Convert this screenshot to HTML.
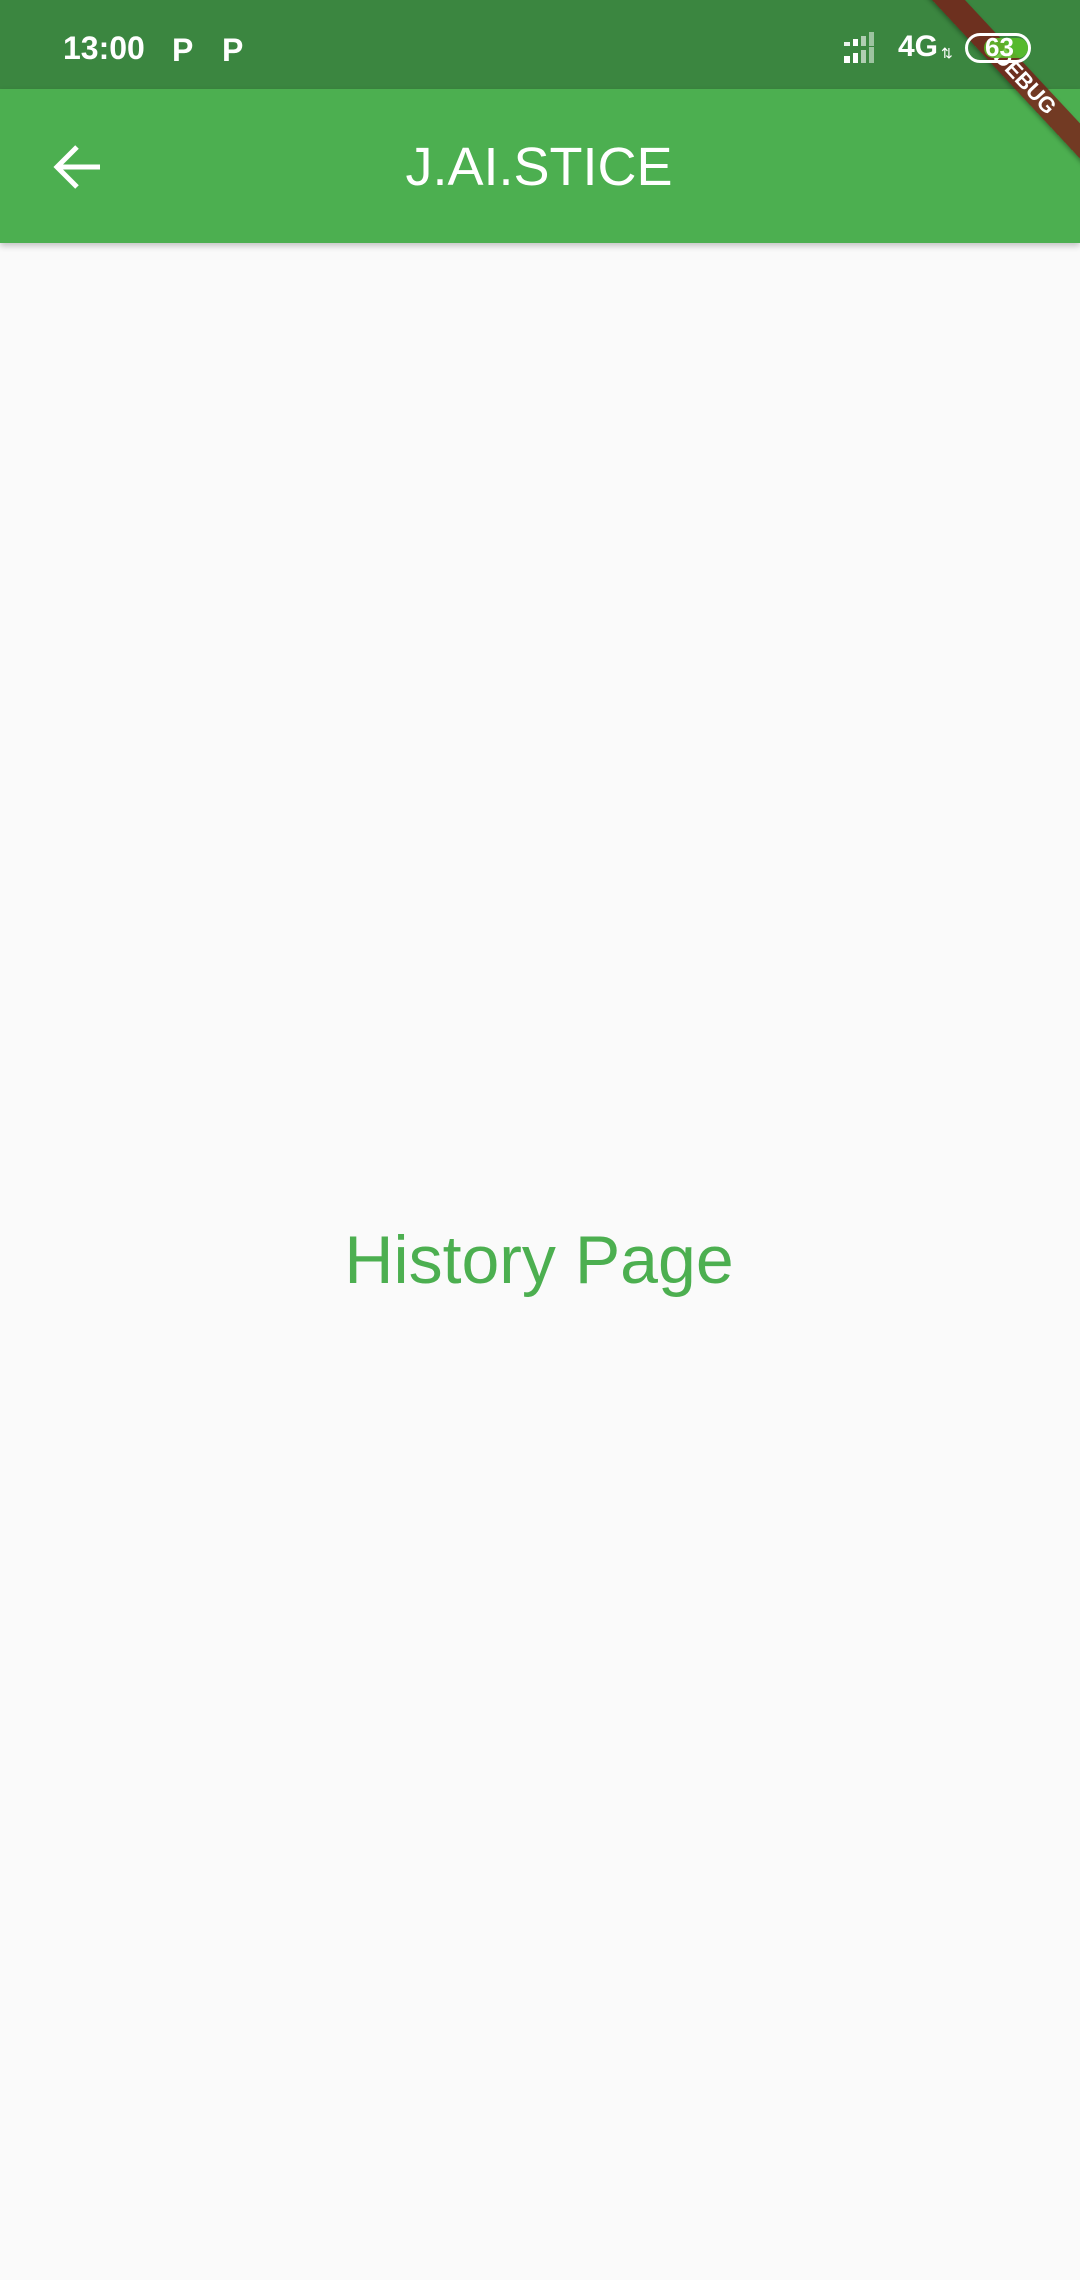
<!DOCTYPE html>
<html><head><meta charset="utf-8"><style>
html,body{margin:0;padding:0}
body{width:1080px;height:2280px;background:#fafafa;position:relative;overflow:hidden;font-family:"Liberation Sans",sans-serif}
.sb{position:absolute;left:0;top:0;width:1080px;height:89px;background:#3b8640}
.ab{position:absolute;left:0;top:89px;width:1080px;height:154px;background:#4caf50;box-shadow:0 3px 6px rgba(0,0,0,0.22)}
.t{position:absolute;color:#fff}
.ribbon{position:absolute;left:875px;top:70px;width:300px;height:24px;background:rgba(127,19,20,0.75);transform:rotate(47deg);color:#fff;font-weight:bold;font-size:22px;line-height:24px;text-align:center;box-shadow:0 2px 4px rgba(0,0,0,0.3)}
</style></head><body>
<div class="sb"></div>
<div class="ab"></div>
<div class="t" style="left:63px;top:28px;font-size:32px;font-weight:bold;line-height:40px">13:00</div>
<div class="t" style="left:172px;top:30px;font-size:32px;font-weight:bold;line-height:40px">P</div>
<div class="t" style="left:222px;top:30px;font-size:32px;font-weight:bold;line-height:40px">P</div>
<svg style="position:absolute;left:844px;top:32px" width="44" height="32">
<g fill="#fff"><rect x="0" y="10" width="6" height="4" opacity=".9"/><rect x="0" y="24" width="6" height="7"/>
<rect x="9" y="7" width="5" height="7"/><rect x="9" y="21" width="5" height="10"/>
<rect x="17" y="4" width="5" height="10" opacity=".6"/><rect x="17" y="18" width="5" height="13" opacity=".6"/>
<rect x="25" y="0" width="5" height="14" opacity=".5"/><rect x="25" y="15" width="5" height="16" opacity=".5"/></g></svg>
<div class="t" style="left:898px;top:29px;font-size:30px;font-weight:bold;line-height:36px">4G</div>
<div class="t" style="left:941px;top:45px;font-size:14px;line-height:16px">⇅</div>
<div class="ribbon">DEBUG</div>
<div style="position:absolute;left:965px;top:33px;border:3px solid #fff;border-radius:15px;width:60px;height:24px"></div>
<div style="position:absolute;left:984px;top:38px;width:44px;height:20px;background:#5cc22a;border-radius:10px;opacity:.85"></div>
<div class="t" style="left:985px;top:32px;font-size:26px;font-weight:bold;line-height:30px">63</div>
<svg style="position:absolute;left:52px;top:144px" width="50" height="46" viewBox="0 0 50 46">
<path d="M48 23H6M25 3L5 23L25 43" stroke="#fff" stroke-width="5" fill="none"/></svg>
<div class="t" style="left:0;width:1078px;text-align:center;top:136px;font-size:54px;line-height:62px">J.AI.STICE</div>
<div style="position:absolute;left:0;width:1078px;text-align:center;top:1220px;font-size:68px;line-height:80px;color:#4caf50">History Page</div>
</body></html>
